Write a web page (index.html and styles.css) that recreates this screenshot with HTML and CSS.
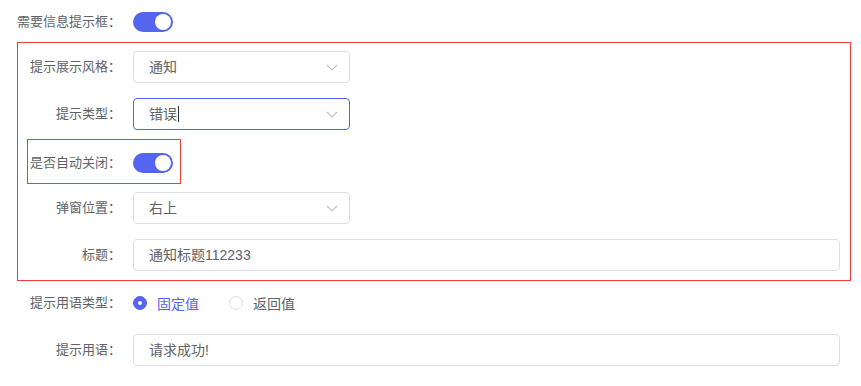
FILE: index.html
```html
<!DOCTYPE html>
<html>
<head>
<title>消息提示设置</title>
<link rel="stylesheet" href="styles.css">
</head>
<body>
<div class="form">
<div class="row">
<div class="label">需要信息提示框：</div>
<div class="switch on"><span class="knob"></span></div>
</div>

<div class="group">
<div class="row">
<div class="label">提示展示风格：</div>
<div class="select"><span>通知</span><svg class="arrow" width="12" height="12" viewBox="0 0 12 12"><polyline points="1,4 6,9 11,4"/></svg></div>
</div>
<div class="row">
<div class="label">提示类型：</div>
<div class="select focus"><span>错误</span><i class="caret"></i><svg class="arrow" width="12" height="12" viewBox="0 0 12 12"><polyline points="1,4 6,9 11,4"/></svg></div>
</div>

<!-- highlighted item -->
<div class="mark">
<div class="row">
<div class="label">是否自动关闭：</div>
<div class="switch on"><span class="knob"></span></div>
</div>
</div>

<div class="row">
<div class="label">弹窗位置：</div>
<div class="select"><span>右上</span><svg class="arrow" width="12" height="12" viewBox="0 0 12 12"><polyline points="1,4 6,9 11,4"/></svg></div>
</div>
<div class="row">
<div class="label">标题：</div>
<div class="input">通知标题112233</div>
</div>
</div>

<div class="row radios">
<div class="label">提示用语类型：</div>
<div class="radio checked"><span class="dot"></span>固定值</div>
<div class="radio"><span class="dot"></span>返回值</div>
</div>
<div class="row">
<div class="label">提示用语：</div>
<div class="input">请求成功!</div>
</div>
</div>
</body>
</html>
```

FILE: styles.css
```css
body { margin: 0; font-family: "Liberation Sans", "Noto Sans CJK SC", sans-serif; color: #606266; background: #fff; }
.form { width: 834px; padding: 6px 0 0 17px; }
.row { display: flex; align-items: center; height: 32px; padding-right: 11px; }
.label { width: 116px; flex: none; box-sizing: border-box; padding-right: 12px; text-align: right; font-size: 13px; line-height: 32px; color: #606266; }

.group { margin-top: 4px; border: 1px solid #f23d3d; padding: 8px 10px 9px 0; }
.group .row { padding-right: 0; margin-bottom: 15px; }
.group .row:last-child { margin-bottom: 0; }
.group > .row > .label { width: 115px; }

.mark { display: inline-block; margin: -6px 0 8px 9px; border: 1px solid #f23d3d; padding: 7px 7px 4px 0; }
.mark .row { margin-bottom: 0; }
.mark .label { width: 105px; }

.switch { width: 40px; height: 20px; border-radius: 10px; background: #dcdfe6; position: relative; }
.switch.on { background: #5465f0; }
.knob { position: absolute; top: 2px; left: 2px; width: 16px; height: 16px; border-radius: 50%; background: #fff; }
.switch.on .knob { left: 22px; }

.select, .input { box-sizing: border-box; height: 32px; border: 1px solid #dcdfe6; border-radius: 4px; padding: 0 15px; font-size: 14px; line-height: 30px; color: #606266; display: flex; align-items: center; }
.select { width: 217px; position: relative; }
.select.focus { border-color: #5465f0; }
.input { flex: 1; }
.arrow { position: absolute; right: 11px; top: 9px; fill: none; stroke: #c0c4cc; stroke-width: 1.2; }
.caret { display: inline-block; width: 1px; height: 16px; background: #303133; margin-left: 1px; }

.radios { margin-top: 6px; margin-bottom: 15px; }
.radio { display: flex; align-items: center; font-size: 14px; margin-right: 30px; color: #606266; }
.radio .dot { width: 14px; height: 14px; box-sizing: border-box; border: 1px solid #dcdfe6; border-radius: 50%; margin-right: 10px; background: #fff; position: relative; }
.radio.checked { color: #5465f0; }
.radio.checked .dot { border-color: #5465f0; background: #5465f0; }
.radio.checked .dot::after { content: ""; position: absolute; left: 4px; top: 4px; width: 4px; height: 4px; border-radius: 50%; background: #fff; }
```
